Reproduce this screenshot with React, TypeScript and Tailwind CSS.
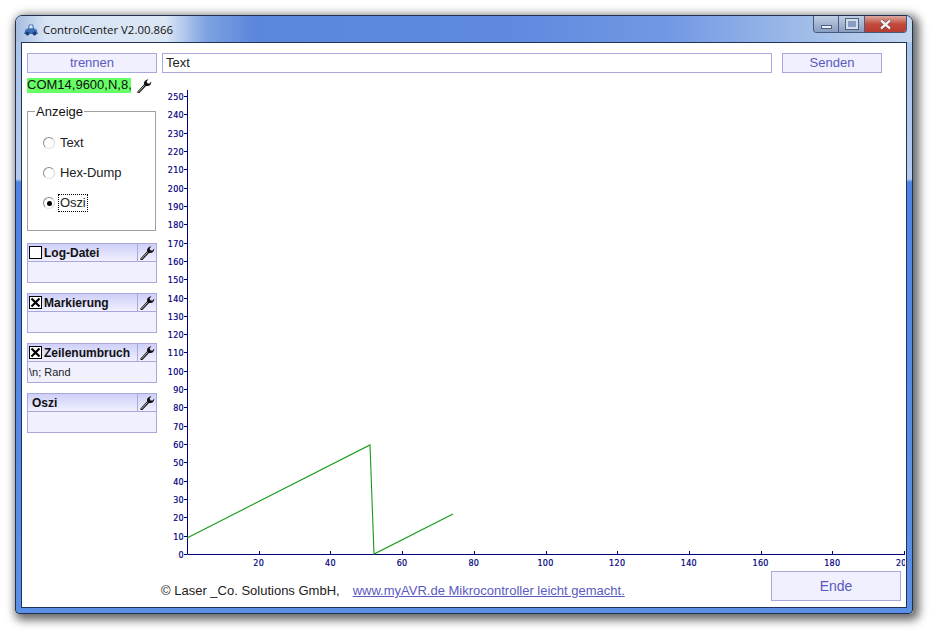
const SANS = '[font-family:"Liberation_Sans",Arial,sans-serif]';

function Spanner({ className = '' }: { className?: string }) {
  return (
    <svg viewBox="0 0 16 16" width="16" height="16" className={className}>
      <path d="M2 15 L1 14 L8.2 6.2 C7.6 4 9 1.6 12.4 1.2 L10.6 3.6 L11.6 5.4 L13.6 5.6 L15.2 3.4 C15.6 6.4 13 8.6 10 8 L3.4 15 Z" fill="#111" />
      <path d="M2.4 14 L8.6 7.4" stroke="#fff" strokeWidth="0.7" />
    </svg>
  );
}

function Radio({ label, checked }: { label: string; checked?: boolean }) {
  return (
    <div className="flex items-center h-[18px]">
      <div className="w-[12px] h-[12px] rounded-full border border-[#8a8a8a] border-r-[#d8d8d8] border-b-[#e4e4e4] bg-white flex items-center justify-center ml-[15px]">
        {checked && <div className="w-[5px] h-[5px] rounded-full bg-black" />}
      </div>
      <span className={`ml-[3px] px-[1px] text-[13px] tracking-[-0.1px] leading-[16px] text-[#222] border border-dotted ${checked ? 'border-black' : 'border-transparent'}`}>{label}</span>
    </div>
  );
}

function Panel({ title, box, text }: { title: string; box?: 'on' | 'off'; text?: string }) {
  return (
    <div className="w-[130px] h-[40px] border border-[#a8a8dc] bg-[#f0f0ff] flex flex-col">
      <div className="h-[18px] flex border-b border-[#a8a8dc] bg-gradient-to-b from-[#cfcff8] to-[#f0f0ff] shrink-0">
        <div className="flex-1 flex items-center">
          {box ? (
            <div className="ml-[1px] w-[13px] h-[13px] border border-black bg-white flex items-center justify-center">
              {box === 'on' && (
                <svg viewBox="0 0 11 11" width="11" height="11">
                  <path d="M1.5 1.5 L9.5 9.5 M9.5 1.5 L1.5 9.5" stroke="#000" strokeWidth="2.2" />
                </svg>
              )}
            </div>
          ) : (
            <div className="w-[2px]" />
          )}
          <span className="ml-[2px] text-[12px] font-bold text-[#111]">{title}</span>
        </div>
        <div className="w-[19px] border-l border-[#a8a8dc] flex items-center justify-center">
          <Spanner />
        </div>
      </div>
      <div className="flex-1 flex items-center text-[11px] text-[#222] pl-[1px]">{text}</div>
    </div>
  );
}

// Plot origin in svg coords; svg sits at page x=162, y=85
const X0 = 25;
const Y0 = 469;
const PX = 3.585;
const PY = 1.832;
const yTicks = Array.from({ length: 26 }, (_, i) => i * 10);
const xTicks = Array.from({ length: 10 }, (_, i) => (i + 1) * 20);

function Chart() {
  return (
    <svg width="743" height="485" className="block">
      <g fontFamily="'DejaVu Sans', sans-serif" fontSize="8" fill="#00007f" stroke="#00007f" strokeWidth="0.2">
        {yTicks.map(v => (
          <text key={v} x={X0 - 3} y={Y0 - v * PY + 4} textAnchor="end" letterSpacing="0.3">{v}</text>
        ))}
        {xTicks.map(v => (
          <text key={v} x={X0 + v * PX} y={Y0 + 12} textAnchor="middle" letterSpacing="0.3">{v}</text>
        ))}
      </g>
      <path d={`M${X0 + 0.5} 5 V${Y0 + 0.5} H743`} stroke="#00007f" fill="none" />
      {yTicks.map(v => (
        <path key={v} d={`M${X0 - 3} ${Math.round(Y0 - v * PY) + 0.5} h3`} stroke="#00007f" />
      ))}
      {xTicks.map(v => (
        <path key={v} d={`M${Math.round(X0 + v * PX) + 0.5} ${Y0 - 3} v3`} stroke="#00007f" />
      ))}
      <polyline points="25,453 208,360 212,469 291,429" fill="none" stroke="#169a16" strokeWidth="1.1" />
    </svg>
  );
}

export default function App() {
  return (
    <div className={`w-[937px] h-[633px] bg-white overflow-hidden pt-[15px] pl-[15px] ${SANS}`}>
      <div className="w-[898px] h-[599px] rounded-t-[7px] rounded-b-[4px] border border-[#1f2f4f] flex flex-col shadow-[3px_3px_10px_3px_rgba(0,0,0,0.6)] bg-[linear-gradient(to_bottom,#a8c4ea_0,#b4cbec_163px,#4f83e4_166px,#5c8fe6_100%)]">
        {/* title bar */}
        <div className="h-[26px] flex shrink-0 rounded-t-[6px] bg-[linear-gradient(to_right,#a4bce0_0,#d8e4f4_30px,#dbe6f5_150px,#7ea2e2_190px,#5a86dc_240px,#5f8ade_500px,#7198e4_650px,#a0bce8_790px,#c4d6ee_100%)]">
          <svg viewBox="0 0 16 14" width="16" height="14" className="ml-[7px] mt-[6px]">
            <path d="M1 12 L2.5 7.5 L5 6.5 L6 2.5 L10 2.5 L11 6.5 L13.5 7.5 L15 12 Z" fill="#3f6fb5" />
            <path d="M6.8 3.2 H9.2 L9.8 6.2 H6.2 Z" fill="#dbe8fa" />
            <circle cx="4.5" cy="11.5" r="2" fill="#1d3f78" />
            <circle cx="11.5" cy="11.5" r="2" fill="#1d3f78" />
          </svg>
          <span className="ml-[4px] mt-[6px] text-[11.4px] leading-[15px] text-[#111] [font-family:'Open_Sans',sans-serif]">ControlCenter V2.00.866</span>
          <div className="ml-auto mr-[5px] flex h-[17px] rounded-b-[4px] border border-t-0 border-[#46597a] overflow-hidden">
            <div className="w-[25px] border-r border-[#4a5f80] bg-gradient-to-b from-[#c0cfe6] to-[#8a9dc0] flex items-center justify-center">
              <div className="w-[11px] h-[4px] mt-[6px] bg-[#e8eef8] border border-[#50627f]" />
            </div>
            <div className="w-[26px] border-r border-[#4a5f80] bg-gradient-to-b from-[#c0cfe6] to-[#8a9dc0] flex items-center justify-center">
              <div className="w-[12px] h-[10px] border-2 border-[#d4dcea] outline outline-1 outline-[#50627f] bg-[#8a9dc0]" />
            </div>
            <div className="w-[41px] bg-gradient-to-b from-[#d8a8a0] via-[#c24a3c] to-[#b63a30] flex items-center justify-center">
              <svg viewBox="0 0 13 11" width="13" height="11">
                <path d="M2 1.5 L11 9.5 M11 1.5 L2 9.5" stroke="#5a2a28" strokeWidth="3.6" />
                <path d="M2 1.5 L11 9.5 M11 1.5 L2 9.5" stroke="#f2f2f2" strokeWidth="2.4" />
              </svg>
            </div>
          </div>
        </div>

        {/* client area */}
        <div className="ml-[5px] w-[886px] h-[566px] border border-[#1f3458] bg-white flex flex-col overflow-hidden">
          <div className="flex pt-[10px]">
            <div className="w-[130px] ml-[5px] shrink-0 flex flex-col">
              <button className="h-[20px] border border-[#a8a8dc] bg-[#f0f0ff] text-[#5a5ac0] text-[13px] leading-[18px]">trennen</button>
              <div className="mt-[5px] flex items-center h-[16px]">
                <span className="w-[104px] h-[15px] -mt-[1px] bg-[#66ff66] text-[13px] leading-[14px] text-[#111] whitespace-nowrap">COM14,9600,N,8,</span>
                <Spanner className="ml-[5px]" />
              </div>
              <fieldset className="mt-[9px] w-[129px] h-[128px] border border-[#a0a0a0] pl-0">
                <legend className="ml-[7px] px-[1px] text-[13px] leading-[16px] text-[#111] translate-y-[1px]">Anzeige</legend>
                <div className="flex flex-col gap-[12px] mt-[15px]">
                  <Radio label="Text" />
                  <Radio label="Hex-Dump" />
                  <Radio label="Oszi" checked />
                </div>
              </fieldset>
              <div className="mt-[12px] flex flex-col gap-[10px]">
                <Panel title="Log-Datei" box="off" />
                <Panel title="Markierung" box="on" />
                <Panel title="Zeilenumbruch" box="on" text="\n; Rand" />
                <Panel title="Oszi" />
              </div>
            </div>

            <div className="ml-[5px] flex flex-col">
              <div className="flex h-[20px]">
                <div className="w-[610px] border border-[#a8a8dc] text-[13px] leading-[18px] pl-[3px] text-[#222]">Text</div>
                <button className="ml-[10px] w-[100px] border border-[#a8a8dc] bg-[#f0f0ff] text-[#5a5ac0] text-[13px] leading-[18px]">Senden</button>
              </div>
              <div className="mt-[12px]">
                <Chart />
              </div>
            </div>
          </div>

          <div className="flex items-start pl-[139px]">
            <span className="mt-[13px] text-[13px] leading-[16px] text-[#222] whitespace-nowrap">© Laser _Co. Solutions GmbH,</span>
            <a className="ml-[13px] mt-[13px] text-[13px] leading-[16px] text-[#5a5ac0] underline whitespace-nowrap">www.myAVR.de Mikrocontroller leicht gemacht.</a>
            <button className="ml-auto mt-[1px] mr-[5px] w-[130px] h-[30px] border border-[#a8a8dc] bg-[#f0f0ff] text-[#5a5ac0] text-[14px] pb-[0px]">Ende</button>
          </div>
        </div>
      </div>
    </div>
  );
}
